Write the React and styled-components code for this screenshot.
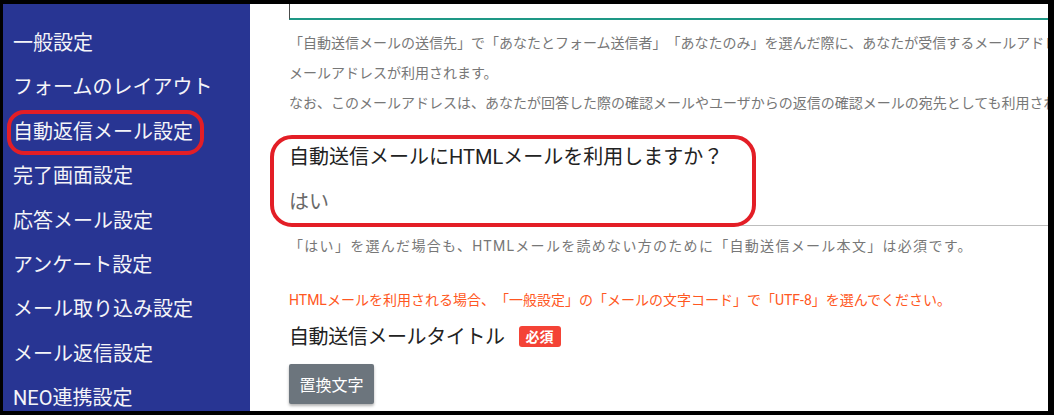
import React from 'react'
import styled, { createGlobalStyle } from 'styled-components'

const GlobalStyle = createGlobalStyle`
  html, body {
    margin: 0;
    padding: 0;
    background: #000;
  }
  body {
    font-family: Roboto, "Noto Sans CJK JP", sans-serif;
    text-spacing-trim: space-all;
  }
`

const Frame = styled.div`
  width: 1054px;
  height: 415px;
  box-sizing: border-box;
  border-style: solid;
  border-color: #000;
  border-width: 4px 6px 4px 3px;
  display: flex;
  overflow: hidden;
  background: #fff;
`

const Sidebar = styled.nav`
  width: 247px;
  flex: none;
  background: #283593;
  padding: 17px 0 0 10px;
  box-sizing: border-box;
`

const NavItem = styled.div`
  position: relative;
  height: 44.4px;
  line-height: 44.4px;
  font-size: 20px;
  color: #f4f4f8;
  white-space: nowrap;

  ${p => p.$circled && `
    &::after {
      content: '';
      position: absolute;
      left: -6px;
      top: 0px;
      width: 197px;
      height: 45px;
      box-sizing: border-box;
      border: 4px solid #e31e26;
      border-radius: 17px;
    }
  `}
`

const Main = styled.main`
  flex: 1;
  min-width: 0;
  padding-left: 39px;
  overflow: hidden;
`

const InputStub = styled.div`
  height: 14px;
  border-left: 1px solid #4a4a4a;
  border-bottom: 2px solid #1e9886;
`

const Help = styled.p`
  margin: 0;
  font-size: 14px;
  letter-spacing: ${p => p.$spacing || 0}px;
  line-height: 30px;
  color: #777;
  white-space: nowrap;
`

const HelpGroup = styled.div`
  margin-top: ${p => p.$top || 0}px;
`

const Field = styled.div`
  position: relative;
  margin-top: 22px;
  border-bottom: 1px solid #bdbdbd;
  padding-bottom: 6px;
`

const FieldLabel = styled.div`
  font-size: 20px;
  line-height: 34px;
  color: #222;
`

const FieldValue = styled.div`
  margin-top: 11px;
  font-size: 20px;
  line-height: 34px;
  color: #6a6a6a;
`

const Ring = styled.span`
  position: absolute;
  left: -19px;
  top: -5px;
  width: 486px;
  height: 92px;
  box-sizing: border-box;
  border: 4px solid #e31e26;
  border-radius: 22px;
  pointer-events: none;
`

const Warning = styled.p`
  margin: 27px 0 0;
  font-size: 14px;
  line-height: 24px;
  color: #ff5722;
  white-space: nowrap;
`

const TitleRow = styled.div`
  margin-top: 8px;
  display: flex;
  align-items: center;
  gap: 14px;
  height: 30px;
`

const Title = styled.span`
  font-size: 20px;
  letter-spacing: -0.4px;
  color: #222;
`

const Badge = styled.span`
  display: inline-flex;
  align-items: center;
  justify-content: center;
  width: 42px;
  height: 21px;
  border-radius: 3px;
  background: #f44336;
  color: #fff;
  font-size: 14px;
  font-weight: 700;
  margin-top: 2px;
`

const Button = styled.button`
  margin-top: 14px;
  width: 85px;
  height: 40px;
  border: none;
  border-radius: 2px;
  background: #6c757d;
  color: #fff;
  font-family: inherit;
  font-size: 16px;
  box-shadow: 0 2px 3px rgba(0, 0, 0, 0.3);
`

const navItems = [
  '一般設定',
  'フォームのレイアウト',
  '自動返信メール設定',
  '完了画面設定',
  '応答メール設定',
  'アンケート設定',
  'メール取り込み設定',
  'メール返信設定',
  'NEO連携設定',
]

export default function App() {
  return (
    <>
      <GlobalStyle />
      <Frame>
        <Sidebar>
          {navItems.map(item => (
            <NavItem key={item} $circled={item === '自動返信メール設定'}>{item}</NavItem>
          ))}
        </Sidebar>
        <Main>
          <InputStub />
          <HelpGroup $top={8}>
            <Help>「自動送信メールの送信先」で「あなたとフォーム送信者」「あなたのみ」を選んだ際に、あなたが受信するメールアドレスとして</Help>
            <Help>メールアドレスが利用されます。</Help>
            <Help>なお、このメールアドレスは、あなたが回答した際の確認メールやユーザからの返信の確認メールの宛先としても利用されます。</Help>
          </HelpGroup>
          <Field>
            <FieldLabel>自動送信メールにHTMLメールを利用しますか？</FieldLabel>
            <FieldValue>はい</FieldValue>
            <Ring />
          </Field>
          <HelpGroup $top={5}>
            <Help $spacing={1.3}>「はい」を選んだ場合も、HTMLメールを読めない方のために「自動送信メール本文」は必須です。</Help>
          </HelpGroup>
          <Warning>HTMLメールを利用される場合、「一般設定」の「メールの文字コード」で「UTF-8」を選んでください。</Warning>
          <TitleRow>
            <Title>自動送信メールタイトル</Title>
            <Badge>必須</Badge>
          </TitleRow>
          <Button>置換文字</Button>
        </Main>
      </Frame>
    </>
  )
}
